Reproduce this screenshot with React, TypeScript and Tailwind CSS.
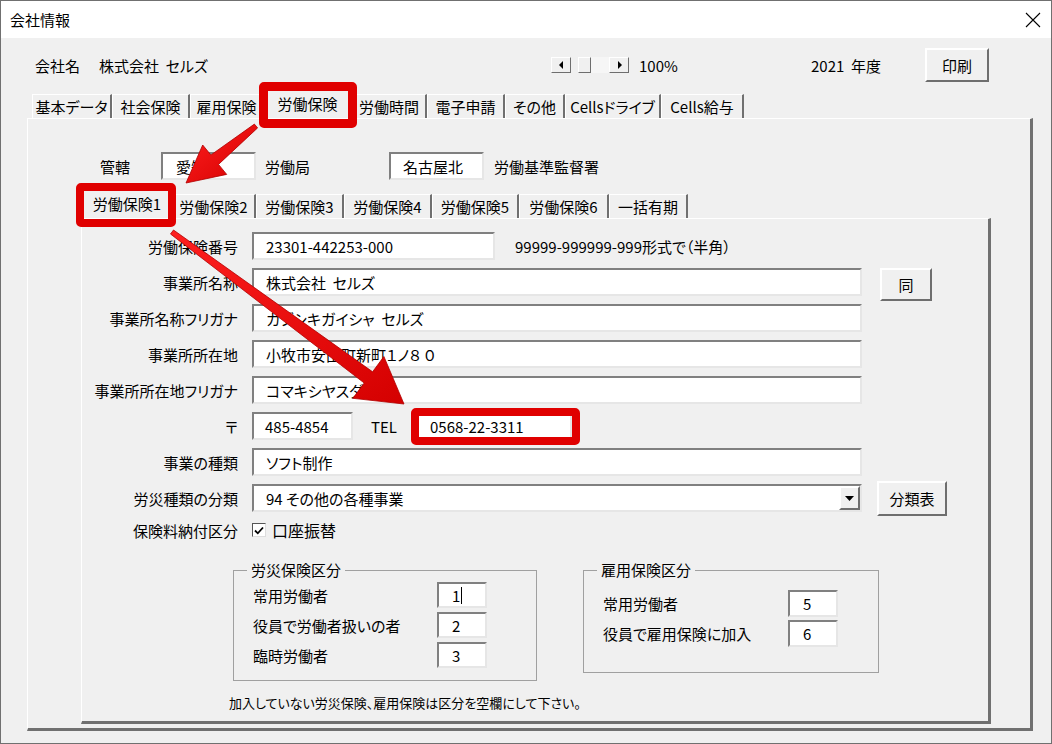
import React from "react";

const FONT = "font-['Noto_Sans_CJK_JP','Liberation_Sans',sans-serif] [font-feature-settings:'palt']";

function Box({ className = "", children }: { className?: string; children?: React.ReactNode }) {
  return (
    <div
      className={`flex items-center bg-white border-2 border-t-[#808080] border-l-[#808080] border-r-[#e6e6e6] border-b-[#e6e6e6] text-[15px] leading-none whitespace-pre overflow-hidden ${className}`}
    >
      {children}
    </div>
  );
}

function Button({ className = "", children }: { className?: string; children: React.ReactNode }) {
  return (
    <div
      className={`flex items-center justify-center bg-[#f0f0f0] border-2 border-t-white border-l-white border-r-[#6e6e6e] border-b-[#6e6e6e] text-[15px] leading-none ${className}`}
    >
      {children}
    </div>
  );
}

function Tab({ label, w, selected }: { label: string; w: string; selected?: boolean }) {
  return (
    <div
      className={`${w} ${selected ? "h-[28px] pb-[3px]" : "h-[24px]"} flex items-center justify-center bg-[#f0f0f0] border-t border-l border-white border-r-2 border-r-[#707070] text-[15px] leading-none whitespace-nowrap`}
    >
      {label}
    </div>
  );
}

function Row({ label, children }: { label: string; children: React.ReactNode }) {
  return (
    <div className="flex items-start h-[28px] mt-[8px] first:mt-0">
      <div className="w-[156px] h-[28px] flex items-center justify-end text-[15px] leading-none whitespace-nowrap">
        {label}
      </div>
      <div className="ml-[14px] flex items-start">{children}</div>
    </div>
  );
}

function Arrow() {
  return (
    <svg className="absolute -left-px -top-px pointer-events-none" width="1052" height="744" viewBox="0 0 1052 744">
      <defs>
        <linearGradient id="red" x1="0" y1="0" x2="1" y2="1">
          <stop offset="0" stopColor="#ff1f1f" />
          <stop offset="1" stopColor="#d40000" />
        </linearGradient>
      </defs>
      <polygon
        points="257.6,127.9 218.5,164.4 226.7,174.4 186,183 202.7,145 210.9,155 254.4,124.1"
        fill="url(#red)"
        stroke="#b00000"
        strokeWidth="0.8"
        strokeLinejoin="round"
      />
      <polygon
        points="173.5,230 372.6,371.8 383.9,356.5 404,404 352.9,398.3 364.2,383 170.5,234"
        fill="url(#red)"
        stroke="#b00000"
        strokeWidth="0.8"
        strokeLinejoin="round"
      />
    </svg>
  );
}

const topTabs = [
  { label: "基本データ", w: "w-[80px]" },
  { label: "社会保険", w: "w-[78px]" },
  { label: "雇用保険", w: "w-[74px]" },
  { label: "労働保険", w: "w-[88px]", selected: true },
  { label: "労働時間", w: "w-[75px]" },
  { label: "電子申請", w: "w-[78px]" },
  { label: "その他", w: "w-[60px]" },
  { label: "Cellsドライブ", w: "w-[96px]" },
  { label: "Cells給与", w: "w-[83px]" },
];

const subTabs = [
  { label: "労働保険1", w: "w-[89px]", selected: true },
  { label: "労働保険2", w: "w-[84px]" },
  { label: "労働保険3", w: "w-[88px]" },
  { label: "労働保険4", w: "w-[88px]" },
  { label: "労働保険5", w: "w-[87px]" },
  { label: "労働保険6", w: "w-[90px]" },
  { label: "一括有期", w: "w-[79px]" },
];

function SmallInput({ value, caret }: { value: string; caret?: boolean }) {
  return (
    <Box className="w-[50px] h-[26px] pl-[13px]">
      <span>{value}</span>
      {caret && <span className="ml-[1px] w-px h-[17px] bg-black" />}
    </Box>
  );
}

export default function App() {
  return (
    <div className={`relative w-[1052px] h-[744px] overflow-hidden bg-[#f0f0f0] border border-[#707070] text-black ${FONT}`}>
      {/* title bar */}
      <div className="h-[37px] bg-white flex items-center pl-[9px] pr-[10px] text-[15px] leading-none">
        <span>会社情報</span>
        <svg className="ml-auto" width="16" height="16" viewBox="0 0 16 16">
          <path d="M1 1L15 15M15 1L1 15" stroke="#000" strokeWidth="1.1" />
        </svg>
      </div>

      <div className="pl-[26px]">
        {/* header row */}
        <div className="mt-[10px] h-[34px] flex items-center text-[15px] leading-none whitespace-pre">
          <div className="ml-[8px] w-[516px] flex">
            <span>会社名</span>
            <span className="ml-[19px]">株式会社  セルズ</span>
          </div>
          <div className="flex items-center h-[16px]">
            <div className="w-[20px] h-[16px] flex items-center justify-center bg-[#f0f0f0] border border-t-white border-l-white border-r-[#6e6e6e] border-b-[#6e6e6e]">
              <svg width="5" height="8" viewBox="0 0 5 8"><path d="M4 0V8L0 4Z" fill="#000" /></svg>
            </div>
            <div className="ml-[7px] w-[13px] h-[16px] bg-[#f0f0f0] border border-t-white border-l-white border-r-[#6e6e6e] border-b-[#6e6e6e]" />
            <div className="w-[18px] h-[16px] bg-[#f6f6f6]" />
            <div className="w-[20px] h-[16px] flex items-center justify-center bg-[#f0f0f0] border border-t-white border-l-white border-r-[#6e6e6e] border-b-[#6e6e6e]">
              <svg width="5" height="8" viewBox="0 0 5 8"><path d="M1 0V8L5 4Z" fill="#000" /></svg>
            </div>
          </div>
          <span className="ml-[10px] w-[172px]">100%</span>
          <span className="w-[114px]">2021  年度</span>
          <Button className="w-[64px] h-[34px]">印刷</Button>
        </div>

        {/* main tabs */}
        <div className="mt-[6px] h-[30px] flex items-end ml-[5px]">
          {topTabs.map((t) => (
            <Tab key={t.label} {...t} />
          ))}
        </div>

        {/* outer panel */}
        <div className="w-[1006px] h-[613px] border-t border-l border-white border-r-[3px] border-b-[3px] border-r-[#707070] border-b-[#707070] pt-[33px]">
          <div className="ml-[72px] h-[28px] flex items-center text-[15px] leading-none whitespace-nowrap">
            <span className="w-[61px]">管轄</span>
            <Box className="w-[95px] h-[28px] pl-[13px]">愛知</Box>
            <span className="w-[133px] pl-[9px]">労働局</span>
            <Box className="w-[95px] h-[28px] pl-[12px]">名古屋北</Box>
            <span className="pl-[10px]">労働基準監督署</span>
          </div>

          <div className="mt-[8px] h-[30px] flex items-end ml-[55px]">
            {subTabs.map((t) => (
              <Tab key={t.label} {...t} />
            ))}
          </div>

          {/* inner panel */}
          <div className="ml-[53px] w-[910px] h-[506px] border-t border-l border-white border-r-[3px] border-b-[3px] border-r-[#707070] border-b-[#707070] pt-[13px]">
            <Row label="労働保険番号">
              <Box className="w-[243px] h-[28px] pl-[12px]">23301-442253-000</Box>
              <span className="ml-[20px] h-[28px] flex items-center text-[15px] leading-none whitespace-nowrap">
                99999-999999-999形式で（半角）
              </span>
            </Row>
            <Row label="事業所名称">
              <Box className="w-[610px] h-[28px] pl-[12px]">株式会社  セルズ</Box>
              <Button className="ml-[18px] w-[52px] h-[33px]">同</Button>
            </Row>
            <Row label="事業所名称フリガナ">
              <Box className="w-[610px] h-[28px] pl-[12px]">カブシキガイシャ  セルズ</Box>
            </Row>
            <Row label="事業所所在地">
              <Box className="w-[610px] h-[28px] pl-[12px]">小牧市安田町新町１ノ８ ０</Box>
            </Row>
            <Row label="事業所所在地フリガナ">
              <Box className="w-[610px] h-[28px] pl-[12px]">コマキシヤスダクシ</Box>
            </Row>
            <Row label="〒">
              <Box className="w-[101px] h-[28px] pl-[11px]">485-4854</Box>
              <span className="ml-[18px] w-[45px] h-[28px] flex items-center text-[15px] leading-none">TEL</span>
              <Box className="w-[156px] h-[28px] pl-[12px]">0568-22-3311</Box>
            </Row>
            <Row label="事業の種類">
              <Box className="w-[610px] h-[28px] pl-[12px]">ソフト制作</Box>
            </Row>
            <Row label="労災種類の分類">
              <Box className="w-[610px] h-[28px] pl-[12px]">
                <span>94 その他の各種事業</span>
                <div className="ml-auto w-[21px] h-full flex items-center justify-center bg-[#f0f0f0] border-2 border-t-white border-l-white border-r-[#6e6e6e] border-b-[#6e6e6e]">
                  <svg width="9" height="5" viewBox="0 0 9 5"><path d="M0 0H9L4.5 5Z" fill="#000" /></svg>
                </div>
              </Box>
              <Button className="ml-[15px] -mt-[3px] w-[70px] h-[35px]">分類表</Button>
            </Row>
            <div className="flex items-center h-[20px] mt-[8px]">
              <div className="w-[156px] flex justify-end text-[15px] leading-none whitespace-nowrap">保険料納付区分</div>
              <div className="ml-[14px] w-[14px] h-[14px] bg-white border border-t-[#555] border-l-[#555] border-r-[#ddd] border-b-[#ddd] flex items-center justify-center">
                <svg width="10" height="9" viewBox="0 0 10 9">
                  <path d="M1 4.5L3.8 7.3L9 1.5" fill="none" stroke="#000" strokeWidth="1.8" />
                </svg>
              </div>
              <span className="ml-[6px] text-[16px] leading-none">口座振替</span>
            </div>

            {/* group boxes */}
            <div className="mt-[20px] ml-[151px] flex items-start">
              <fieldset className="w-[304px] border border-[#a0a0a0] pt-[2px] pb-[12px]">
                <legend className="ml-[13px] px-[4px] h-[20px] text-[15px] leading-[20px]">労災保険区分</legend>
                <div className="flex flex-col gap-[4px]">
                  {[
                    ["常用労働者", "1"],
                    ["役員で労働者扱いの者", "2"],
                    ["臨時労働者", "3"],
                  ].map(([l, v], i) => (
                    <div key={l} className="flex items-center">
                      <span className="pl-[19px] w-[203px] text-[15px] leading-none whitespace-nowrap">{l}</span>
                      <SmallInput value={v} caret={i === 0} />
                    </div>
                  ))}
                </div>
              </fieldset>
              <fieldset className="ml-[46px] w-[296px] border border-[#a0a0a0] pt-[10px] pb-[25px]">
                <legend className="ml-[13px] px-[4px] h-[20px] text-[15px] leading-[20px]">雇用保険区分</legend>
                <div className="flex flex-col gap-[3px]">
                  {[
                    ["常用労働者", "5"],
                    ["役員で雇用保険に加入", "6"],
                  ].map(([l, v]) => (
                    <div key={l} className="flex items-center">
                      <span className="pl-[19px] w-[204px] text-[15px] leading-none whitespace-nowrap">{l}</span>
                      <Box className="w-[50px] h-[27px] pl-[13px]">{v}</Box>
                    </div>
                  ))}
                </div>
              </fieldset>
            </div>

            <div className="mt-[13px] ml-[147px] text-[13px] leading-[18px] whitespace-nowrap">
              加入していない労災保険、雇用保険は区分を空欄にして下さい。
            </div>
          </div>
        </div>
      </div>

      {/* red highlight boxes */}
      <div className="absolute left-[258px] top-[81px] w-[98px] h-[46px] border-[9px] border-[#e00000] rounded-[5px]" />
      <div className="absolute left-[75px] top-[182px] w-[100px] h-[44px] border-[8px] border-[#e00000] rounded-[5px]" />
      <div className="absolute left-[410px] top-[407px] w-[169px] h-[37px] border-[8px] border-[#e00000] rounded-[5px]" />
      <Arrow />
    </div>
  );
}
